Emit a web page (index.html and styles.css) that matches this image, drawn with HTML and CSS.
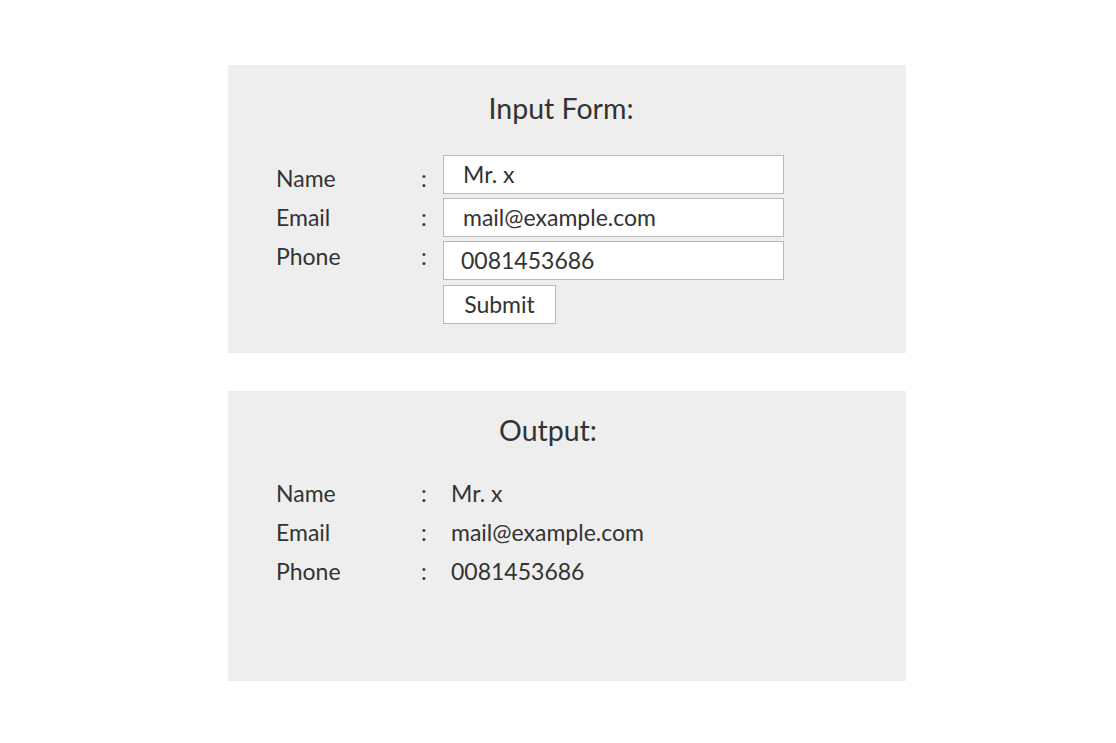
FILE: index.html
```html
<!DOCTYPE html>
<html>
<head>
<meta charset="utf-8">
<link rel="stylesheet" href="styles.css">
</head>
<body>
<main class="page">
  <section class="panel panel-input">
    <h1 class="title">Input Form:</h1>
    <form class="form">
      <div class="labels">
        <div class="row"><label class="label" for="name">Name</label><span class="colon">:</span></div>
        <div class="row"><label class="label" for="email">Email</label><span class="colon">:</span></div>
        <div class="row"><label class="label" for="phone">Phone</label><span class="colon">:</span></div>
      </div>
      <div class="fields">
        <input class="field" id="name" type="text" value="Mr. x">
        <input class="field" id="email" type="text" value="mail@example.com">
        <input class="field field-phone" id="phone" type="text" value="0081453686">
        <button class="submit" type="button">Submit</button>
      </div>
    </form>
  </section>
  <section class="panel panel-output">
    <h1 class="title title-output">Output:</h1>
    <div class="output">
      <span class="label">Name</span><span class="colon">:</span><span class="value">Mr. x</span>
      <span class="label">Email</span><span class="colon">:</span><span class="value">mail@example.com</span>
      <span class="label">Phone</span><span class="colon">:</span><span class="value">0081453686</span>
    </div>
  </section>
</main>
</body>
</html>
```
FILE: styles.css
```css
* { box-sizing: border-box; }
html, body { margin: 0; padding: 0; background: #ffffff; }
body {
  font-family: Lato, "Open Sans", sans-serif;
  color: #333333;
}
.page {
  width: 678px;
  margin-left: 228px;
  padding-top: 65px;
  display: flex;
  flex-direction: column;
  gap: 38px;
}
.panel {
  background: #eeeeee;
  padding: 0 48px;
}
.panel-input { height: 288px; }
.panel-output { height: 290px; }
.title {
  margin: 0;
  font-weight: 400;
  font-size: 28.5px;
  line-height: 34px;
  text-align: center;
  padding-top: 26px;
  padding-right: 12px;
}
.title-output { padding-top: 22px; padding-right: 38px; }
.form {
  margin-top: 30px;
  display: flex;
}
.labels {
  width: 167px;
  padding-top: 3px;
  display: flex;
  flex-direction: column;
}
.row {
  height: 39px;
  display: flex;
  align-items: center;
}
.row .label { width: 145px; }
.label, .colon, .value {
  font-size: 23px;
  line-height: 26px;
}
.fields {
  display: flex;
  flex-direction: column;
  align-items: flex-start;
  gap: 4px;
}
.field {
  width: 341px;
  height: 39px;
  border: 1px solid #b8b8b8;
  background: #ffffff;
  font-family: inherit;
  font-size: 23px;
  color: #333333;
  padding: 0 0 2px 19px;
  margin: 0;
  outline: none;
}
.field-phone { padding-left: 17px; }
.submit {
  margin-top: 1px;
  width: 113px;
  height: 39px;
  border: 1px solid #b8b8b8;
  background: #ffffff;
  font-family: inherit;
  font-size: 23px;
  color: #333333;
  padding: 0 0 2px;
}
.output {
  margin-top: 26px;
  display: grid;
  grid-template-columns: 145px 30px 1fr;
  grid-auto-rows: 39px;
  align-items: center;
}
```
